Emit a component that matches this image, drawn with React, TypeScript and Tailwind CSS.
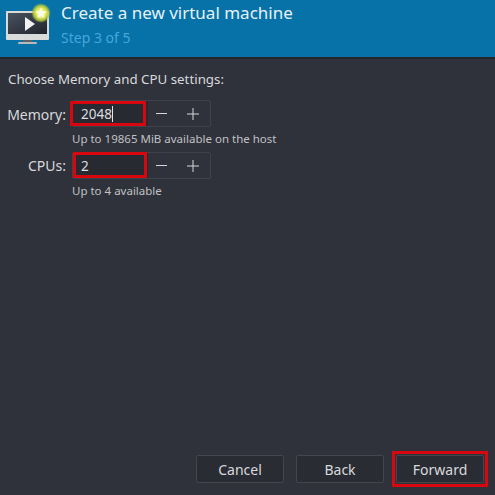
const font = { fontFamily: '"Noto Sans", sans-serif' };

function MonitorIcon() {
  return (
    <svg width="50" height="46" viewBox="0 0 50 46" className="shrink-0">
      <defs>
        <radialGradient id="glow">
          <stop offset="0.45" stopColor="#e8f06a" />
          <stop offset="0.75" stopColor="#b5c83a" stopOpacity="0.9" />
          <stop offset="1" stopColor="#8fae3a" stopOpacity="0" />
        </radialGradient>
        <linearGradient id="screen" x1="0" y1="0" x2="1" y2="1">
          <stop offset="0" stopColor="#4a5260" />
          <stop offset="1" stopColor="#20242c" />
        </linearGradient>
      </defs>
      <rect x="5" y="11" width="43" height="29" rx="1" fill="#d9dbdb" />
      <rect x="7" y="13" width="39" height="21" fill="url(#screen)" />
      <rect x="22" y="40" width="9" height="2" fill="#5f6264" />
      <rect x="17" y="42" width="19" height="2" rx="1" fill="#b9bbbb" />
      <path d="M24 17 L34 24 L24 31 Z" fill="#f2f2f2" />
      <circle cx="40" cy="13" r="10" fill="url(#glow)" />
      <path d="M40 7.5 L41.7 11 L45.5 11.5 L42.7 14.2 L43.4 18 L40 16.2 L36.6 18 L37.3 14.2 L34.5 11.5 L38.3 11 Z" fill="#fbfbe6" />
    </svg>
  );
}

function Spin({ value, caret }: { value: string; caret?: boolean }) {
  return (
    <div className="flex w-[139px] h-[27px] rounded-[2px] border border-[#3f424b] bg-[#2f323a]">
      <div className="relative flex items-center w-[75px] bg-[#282a31] pl-[8px] pt-[1px] text-[13.5px] text-[#dcdde0]">
        {value}
        {caret && <span className="w-px h-[16px] bg-[#e4e4e4]" />}
        <div
          className={
            caret
              ? "absolute inset-y-0 left-[-3px] right-[2px] border-[3px] border-[#d7060f]"
              : "absolute top-[-1px] bottom-0 left-0 right-[1px] border-[3px] border-[#d7060f]"
          }
        />
      </div>
      <div className="flex flex-1 items-center justify-center gap-[20px] pr-[4px] text-[#d6d7da]">
        <span className="w-[11px] h-px bg-[#d6d7da]" />
        <svg width="12" height="12" viewBox="0 0 12 12">
          <path d="M0 6H12M6 0V12" stroke="#d6d7da" strokeWidth="1" />
        </svg>
      </div>
    </div>
  );
}

function Btn({ label }: { label: string }) {
  return (
    <div className="flex items-center justify-center w-[88px] h-[28px] rounded-[2px] border border-[#43464f] bg-[#2a2c34] text-[14px] text-[#d8d9dc]">
      {label}
    </div>
  );
}

export default function App() {
  return (
    <div className="flex flex-col w-[495px] h-[495px] overflow-hidden bg-[#2f323a]" style={font}>
      <div className="flex h-[57px] shrink-0 items-start bg-[#0672a8] pl-[1px]">
        <MonitorIcon />
        <div className="ml-[10px]">
          <div className="mt-[2px] text-[17px] leading-[22px] text-[#e6f1f6]">Create a new virtual machine</div>
          <div className="mt-[5px] text-[14px] leading-[18px] text-[#46a6dc]">Step 3 of 5</div>
        </div>
      </div>
      <div className="h-[2px] shrink-0 bg-[#24262c]" />

      <div className="flex flex-1 flex-col px-[8px]">
        <div className="mt-[11px] text-[13.3px] leading-[18px] text-[#d8d9dc]">Choose Memory and CPU settings:</div>

        <div className="mt-[12px] grid grid-cols-[58px_auto] justify-start gap-x-[6px]">
          <div className="flex h-[27px] items-center justify-end pt-[1px] text-[14px] text-[#d8d9dc]">Memory:</div>
          <Spin value="2048" caret />
          <div />
          <div className="mt-[4px] text-[11.5px] leading-[16px] text-[#c0c1c5]">Up to 19865 MiB available on the host</div>
          <div className="mt-[5px] flex h-[27px] items-center justify-end text-[14px] text-[#d8d9dc]">CPUs:</div>
          <div className="mt-[5px]"><Spin value="2" /></div>
          <div />
          <div className="mt-[4px] text-[11.5px] leading-[16px] text-[#c0c1c5]">Up to 4 available</div>
        </div>

        <div className="mt-auto mb-[12px] flex justify-end pr-[3px] gap-[12px]">
          <Btn label="Cancel" />
          <Btn label="Back" />
          <div className="relative">
            <Btn label="Forward" />
            <div className="absolute inset-y-[-4px] inset-x-[-4px] border-[3px] border-[#d7060f]" />
          </div>
        </div>
      </div>
    </div>
  );
}
